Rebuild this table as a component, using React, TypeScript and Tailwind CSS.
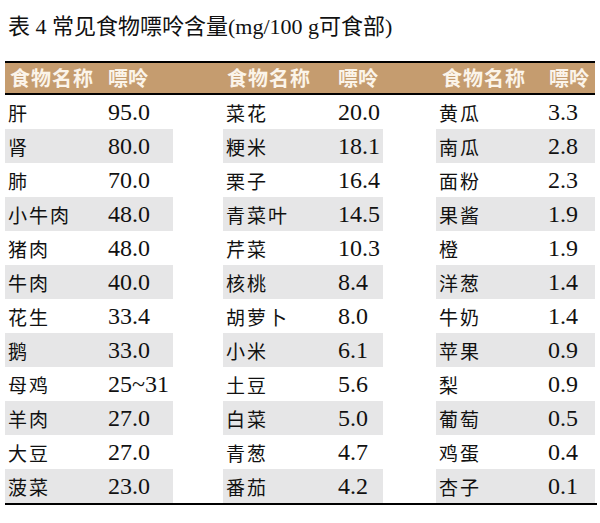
const rows: [string, string, string, string, string, string][] = [
  ['肝', '95.0', '菜花', '20.0', '黄瓜', '3.3'],
  ['肾', '80.0', '粳米', '18.1', '南瓜', '2.8'],
  ['肺', '70.0', '栗子', '16.4', '面粉', '2.3'],
  ['小牛肉', '48.0', '青菜叶', '14.5', '果酱', '1.9'],
  ['猪肉', '48.0', '芹菜', '10.3', '橙', '1.9'],
  ['牛肉', '40.0', '核桃', '8.4', '洋葱', '1.4'],
  ['花生', '33.4', '胡萝卜', '8.0', '牛奶', '1.4'],
  ['鹅', '33.0', '小米', '6.1', '苹果', '0.9'],
  ['母鸡', '25~31', '土豆', '5.6', '梨', '0.9'],
  ['羊肉', '27.0', '白菜', '5.0', '葡萄', '0.5'],
  ['大豆', '27.0', '青葱', '4.7', '鸡蛋', '0.4'],
  ['菠菜', '23.0', '番茄', '4.2', '杏子', '0.1'],
]

const cjk = "font-['Noto_Sans_CJK_SC',sans-serif]"
const num = "font-['Liberation_Serif','Noto_Sans_CJK_SC',serif]"

function Cell({ name, value, valueX, gray }: { name: string; value: string; valueX: string; gray: boolean }) {
  return (
    <div className={`flex h-[34px] items-center ${gray ? 'bg-[#e6e6e7]' : ''}`}>
      <span className={`${cjk} pl-[3px] text-[19px] leading-none tracking-[2px] text-[#111] ${valueX}`}>{name}</span>
      <span className={`${num} text-[24px] leading-none text-[#111]`}>{value}</span>
    </div>
  )
}

export default function App() {
  return (
    <div className="w-[600px] h-[523px] bg-white">
      <div className={`pl-[8px] pt-[9px] h-[61px] text-[22px] leading-[30px] text-[#111] ${num}`}>
        <span className={cjk}>表</span> 4 <span className={cjk}>常见食物嘌呤含量</span>(mg/100 g<span className={cjk}>可食部</span>)
      </div>
      <div className="ml-[5px] w-[590px] border-y-2 border-black">
        <div className={`grid h-[30px] grid-cols-[168px_50px_160px_53px_159px] items-center bg-[#c59c6f] text-[20px] leading-none font-bold text-[#fbf4ea] ${cjk}`}>
          <div className="flex"><span className="w-[103px] pl-[5px] tracking-[1px]">食物名称</span><span>嘌呤</span></div>
          <div />
          <div className="flex"><span className="w-[115px] pl-[4px] tracking-[1px]">食物名称</span><span>嘌呤</span></div>
          <div />
          <div className="flex"><span className="w-[113px] pl-[6px] tracking-[1px]">食物名称</span><span>嘌呤</span></div>
        </div>
      </div>
      <div className="ml-[5px] w-[592px] border-b-2 border-black">
        {rows.map((r, i) => (
          <div key={i} className="grid h-[34px] grid-cols-[168px_50px_160px_53px_159px]">
            <Cell name={r[0]} value={r[1]} valueX="w-[103px]" gray={i % 2 === 1} />
            <div />
            <Cell name={r[2]} value={r[3]} valueX="w-[115px]" gray={i % 2 === 1} />
            <div />
            <Cell name={r[4]} value={r[5]} valueX="w-[112px]" gray={i % 2 === 1} />
          </div>
        ))}
      </div>
    </div>
  )
}
